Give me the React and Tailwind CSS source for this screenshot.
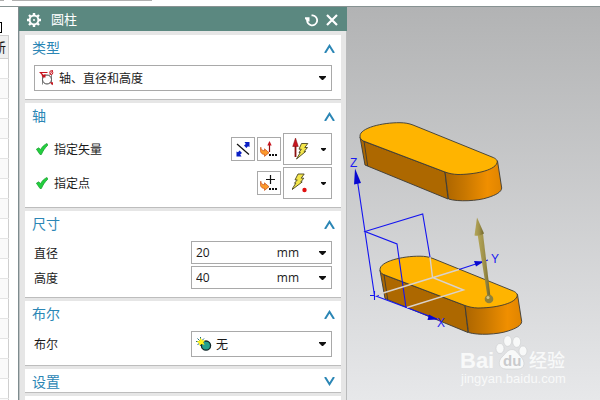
// src/App.jsx
import React, { useState } from "react";
import clsx from "clsx";

const ROWS = Array.from({ length: 18 }, (_, i) => i);

/* ---------- small icons ---------- */

function GearIcon() {
  return (
    <svg width="14" height="14" viewBox="0 0 14 14" fill="none" stroke="#fff">
      <circle cx="7" cy="7" r="4.4" strokeWidth="2" />
      <circle cx="7" cy="7" r="1" fill="#fff" stroke="none" />
      <g strokeWidth="2.4">
        <path d="M7 0v2M7 12v2M0 7h2M12 7h2" />
        <path d="M2 2l1.5 1.5M10.5 10.5L12 12M12 2l-1.5 1.5M3.5 10.5L2 12" />
      </g>
    </svg>
  );
}

function ResetIcon() {
  return (
    <svg width="13" height="13" viewBox="0 0 13 13" fill="none" stroke="#fff" strokeWidth="1.8">
      <path d="M6.5 1.4h1.2a5 5 0 1 1-5.500 4.100" />
      <path d="M0 3.300h4.500v4.200H3L0 5z" fill="#fff" stroke="none" />
    </svg>
  );
}

function CloseIcon() {
  return (
    <svg width="12" height="12" viewBox="0 0 12 12" stroke="#fff" strokeWidth="2.2">
      <path d="M1 1l10 10M11 1L1 11" />
    </svg>
  );
}

function Chevron({ down }) {
  return (
    <svg width="11" height="9" viewBox="0 0 11 9" fill="none" stroke="#2b86b5" strokeWidth="2">
      <path d={down ? "M1 0L5.500 7.200L10 0" : "M1 9L5.500 1.800L10 9"} />
    </svg>
  );
}

function Caret({ small }) {
  return small ? (
    <svg width="5" height="3" viewBox="0 0 5 3" fill="#111">
      <path d="M0 0h5v1L3 3H2L0 1z" />
    </svg>
  ) : (
    <svg width="7" height="4" viewBox="0 0 7 4" fill="#111">
      <path d="M0 0h7v1L4 4H3L0 1z" />
    </svg>
  );
}

function CheckIcon() {
  return (
    <svg width="12" height="12" viewBox="0 0 12 12">
      <path
        d="M.4 6.2L2.8 4.800l1.700 1.900C6 4 8 1.800 11 .5l.8 1.700C9 4.800 7 7.800 5.400 11.500H4z"
        fill="#22d03e"
        stroke="#159a2b"
        strokeWidth=".7"
      />
    </svg>
  );
}

function AxisDiameterIcon() {
  return (
    <svg width="16" height="16" viewBox="0 0 16 16" fill="none">
      <circle cx="8" cy="9.500" r="4.500" stroke="#444" strokeWidth="1" />
      <path d="M3.500 5.500v9M12.500 4.500v10" stroke="#666" strokeWidth=".8" />
      <path d="M.5 2.500h8M1.500 2.500l3.500 4" stroke="#c8141e" strokeWidth="1.200" />
      <path d="M2.500 5.500l4-1.500v3.500H4z" fill="#c8141e" />
      <ellipse cx="12.300" cy="2.600" rx="1.500" ry="2" stroke="#c8141e" />
      <path d="M10.800 5l3-5" stroke="#c8141e" strokeWidth=".8" />
      <path d="M10.500 12.500l3.500 2.800v-3z" fill="#c8141e" />
    </svg>
  );
}

function BooleanNoneIcon() {
  return (
    <svg width="16" height="14" viewBox="0 0 16 14">
      <circle cx="10" cy="8.600" r="4.600" fill="#22a08c" stroke="#12282a" strokeWidth="1.300" />
      <path d="M4.500 0v9M0 4.500h9M1.500 1.500l6.500 6.500M8 1.500L1.500 8" stroke="#1f6a80" strokeWidth="1" />
      <path d="M4.800 .8l1.200 2.400 3 0L7.300 5.300 8.500 8 5.600 7 3.300 8.800 3.100 6.200.6 4.800 3.300 3.800z" fill="#fff21a" />
    </svg>
  );
}

function ReverseIcon() {
  return (
    <svg width="16" height="16" viewBox="0 0 16 16">
      <path d="M2 3l12 10.500" stroke="#111" strokeWidth="1.200" />
      <path d="M14.500 1v5l-1.500-.8-1.600 1.800-2.400-2.400L10.800 3 9.500 1z" fill="#0a1fc4" />
      <path d="M1.500 15.500v-5l1.500.8 1.600-1.800L7 11.900l-1.800 1.600 1.300 2z" fill="#0a1fc4" />
    </svg>
  );
}

function PickerArrow() {
  return (
    <>
      <path
        d="M.8 6.200c.4 2.600 1.400 3.500 3.700 3.500V7.800L9 11.700l-4.500 3.700v-2C1.200 13.400-.6 10.500.8 6.200z"
        fill="#fb9a2c"
        stroke="#cc4a12"
        strokeWidth=".7"
      />
      <path d="M9 14h2M12 14h2M15 14h2" stroke="#111" strokeWidth="2" />
    </>
  );
}

function VectorDialogIcon() {
  return (
    <svg width="18" height="17" viewBox="0 0 18 17">
      <PickerArrow />
      <path d="M9.500 4v7" stroke="#8c1010" strokeWidth="1.200" />
      <path d="M9.500 0l2.200 4.600H7.300z" fill="#c8141e" />
    </svg>
  );
}

function PointDialogIcon() {
  return (
    <svg width="18" height="17" viewBox="0 0 18 17">
      <PickerArrow />
      <path d="M10.500 0v9M6 4.500h9" stroke="#111" strokeWidth="1.200" />
    </svg>
  );
}

function InferredVectorIcon() {
  return (
    <svg width="17" height="22" viewBox="0 0 17 22">
      <path d="M3.500 8v11" stroke="#8c1010" strokeWidth="1.800" />
      <path d="M3.500 0l2.800 8.500H.7z" fill="#c8141e" stroke="#7d0c0c" strokeWidth=".5" />
      <path
        d="M9.500 5.500h6.300l-3 4h2.700l-3.300 4h1.500L4.500 21l3.800-6.500H7l2.300-3.300H7z"
        fill="#f4e64a"
        stroke="#4a4520"
        strokeWidth=".9"
      />
    </svg>
  );
}

function InferredPointIcon() {
  return (
    <svg width="17" height="20" viewBox="0 0 17 20">
      <path
        d="M6 1h6.200l-3 4.200h2.600L8.800 9h1.400L-.5 17l4.300-6.800H2.500l2.800-3.300H3z"
        fill="#f4e64a"
        stroke="#4a4520"
        strokeWidth=".9"
      />
      <circle cx="12.500" cy="17" r="2.200" fill="#e01010" />
    </svg>
  );
}

/* ---------- dialog parts ---------- */

function Section({ title, collapsed, children }) {
  return (
    <section className="border-b border-[#bdbdbd] bg-white">
      <h2 className={clsx("flex items-center justify-between pt-0.5 pr-[6px] pl-[7px]", collapsed ? "h-[23px]" : "h-6")}>
        <span className="text-sm text-[#2b86b5]">{title}</span>
        <button type="button" aria-label={title}>
          <Chevron down={collapsed} />
        </button>
      </h2>
      {!collapsed && <div className="flex flex-col gap-0.5 px-[9px] pt-1.5 pb-2">{children}</div>}
    </section>
  );
}

function IconSelect({ id, label, icon, options }) {
  return (
    <div className="relative w-full">
      <select
        id={id}
        aria-label={label}
        className="block h-[26px] w-full appearance-none border border-[#a9a9a9] bg-white pt-0.5 pl-6 text-xs text-[#1a1a1a]"
      >
        {options.map((o) => (
          <option key={o}>{o}</option>
        ))}
      </select>
      <span className="pointer-events-none absolute inset-y-0 left-[5px] flex items-center">{icon}</span>
      <span className="pointer-events-none absolute inset-y-0 right-[6px] flex items-center">
        <Caret />
      </span>
    </div>
  );
}

function NumberField({ id, label, initial }) {
  const [value, setValue] = useState(initial);
  return (
    <div className="flex items-center justify-between">
      <label htmlFor={id} className="pt-0.5">{label}</label>
      <div className="flex h-[23px] w-[141px] items-center border border-[#a9a9a9] bg-white pr-[5px] pl-1">
        <input
          id={id}
          value={value}
          onChange={(e) => setValue(e.target.value)}
          className="w-0 flex-1 outline-none"
        />
        <span>mm</span>
        <button type="button" aria-label={label + " mm"} className="ml-5">
          <Caret />
        </button>
      </div>
    </div>
  );
}

function PickRow({ label, small, large }) {
  return (
    <div className="flex h-8 items-center gap-0.5 pl-0.5">
      <CheckIcon />
      <span className="ml-1 flex-1 pt-0.5">{label}</span>
      {small.map(([name, icon]) => (
        <button
          key={name}
          type="button"
          aria-label={name}
          className="flex h-6 w-6 items-center justify-center border border-[#a9a9a9] bg-white"
        >
          {icon}
        </button>
      ))}
      <button
        type="button"
        aria-label={label}
        className="flex h-8 w-[49px] items-center justify-between border border-[#a9a9a9] bg-white pr-[5px] pl-2"
      >
        {large}
        <Caret small />
      </button>
    </div>
  );
}

function CylinderDialog() {
  return (
    <div className="flex w-[329px] shrink-0 flex-col border-l border-[#7e8b8e] bg-[#e6e6e6]">
      <header className="flex h-6 shrink-0 items-center bg-[#5b8880] pt-0.5 pr-[9px] pl-2 text-white">
        <GearIcon />
        <h1 className="ml-[10px] flex-1 text-[13px]">圆柱</h1>
        <button type="button" aria-label="重置" className="mr-2">
          <ResetIcon />
        </button>
        <button type="button" aria-label="关闭">
          <CloseIcon />
        </button>
      </header>

      <div className="flex flex-1 flex-col gap-[3px] border-r border-l border-r-[#b9babb] border-l-[#bfc4c5] pt-1 pr-[5px] pl-[5px]">
        <Section title="类型">
          <IconSelect id="type" label="类型" icon={<AxisDiameterIcon />} options={["轴、直径和高度", "圆弧和高度"]} />
        </Section>

        <Section title="轴">
          <PickRow
            label="指定矢量"
            small={[
              ["反向", <ReverseIcon />],
              ["矢量对话框", <VectorDialogIcon />],
            ]}
            large={<InferredVectorIcon />}
          />
          <PickRow label="指定点" small={[["点对话框", <PointDialogIcon />]]} large={<InferredPointIcon />} />
        </Section>

        <Section title="尺寸">
          <NumberField id="diameter" label="直径" initial="20" />
          <NumberField id="height" label="高度" initial="40" />
        </Section>

        <Section title="布尔">
          <div className="flex items-center justify-between">
            <label htmlFor="boolean" className="pt-0.5">布尔</label>
            <div className="w-[141px]">
              <IconSelect id="boolean" label="布尔" icon={<BooleanNoneIcon />} options={["无", "求和", "求差", "求交"]} />
            </div>
          </div>
        </Section>

        <Section title="设置" collapsed />
        <div className="flex-1 bg-white" />
      </div>
    </div>
  );
}

/* ---------- 3D view ---------- */

function Slot() {
  return (
    <g stroke="#3b3a36" strokeWidth=".9" strokeLinejoin="round">
      <path d="M360 137L365 165L448 199L445 172L363 141z" fill="#ad6800" />
      <path
        d="M445 172L448.500 199C458 202 478 201 488 197.500C496 195 501.500 192 501.700 188L497.500 161z"
        fill="url(#round)"
      />
      <path
        d="M360 136C360 128 382 122.500 400 122.700C405 122.700 409 123.500 413 125L492 157C496 158.500 498 160.500 497 163C494 171 473 174.500 458 174.500C453 174.300 449 173.500 445 172L363.500 141C361 140 360 138 360 136z"
        fill="#ffb400"
      />
      <path d="M364 141L367.700 166" />
    </g>
  );
}

function Viewport() {
  return (
    <main className="min-w-0 flex-1 bg-linear-to-b from-[#b2b3b4] to-[#e7e8ea]">
      <svg viewBox="347 7 253 393" preserveAspectRatio="xMinYMin slice" className="h-full w-full">
        <defs>
          <linearGradient id="round">
            <stop offset="0" stopColor="#ac6500" />
            <stop offset=".35" stopColor="#c87700" />
            <stop offset=".75" stopColor="#f08f00" />
            <stop offset="1" stopColor="#e08400" />
          </linearGradient>
          <linearGradient id="shaft">
            <stop offset="0" stopColor="#b5a75a" />
            <stop offset=".5" stopColor="#a0924a" />
            <stop offset="1" stopColor="#6f652c" />
          </linearGradient>
        </defs>

        <Slot />
        <g transform="translate(20 133.500)">
          <Slot />
        </g>

        {/* datum csys */}
        <g fill="none" stroke="#1414f0" strokeWidth="1.100">
          <path d="M374.500 295.500L357 178M459 269.500L488 260M374.500 295.500L437 319" />
          <path d="M430 257L422.700 214L365 231.500L397 244L406 307.500" />
          <path d="M370 295.500h9M374.500 291v9" />
        </g>
        <g fill="none" stroke="#d9d2cc" strokeWidth="1.400">
          <path d="M375 295.500L459 269.500M430 257L432.500 277.500L463.500 290L407 307.500" />
        </g>
        <g fill="#0808d0">
          <path d="M355 168.500L361 183L354 184.500z" />
          <path d="M484 261.500L474 261L476 266.500z" />
          <path d="M438 319.500L429 314.500L427.500 320z" />
        </g>
        <g fill="#1a1af0" fontFamily="Liberation Sans, sans-serif" fontSize="12">
          <text x="350" y="167">Z</text>
          <text x="491" y="263">Y</text>
          <text x="437" y="327">X</text>
        </g>

        {/* direction handle */}
        <path d="M477.500 234L483 233.500L490.500 297H487.500z" fill="url(#shaft)" />
        <path d="M477 217.500L484 233.500Q479 236.500 474.500 235.500z" fill="url(#shaft)" />
        <circle cx="489" cy="299" r="4.300" fill="#8f823c" />
        <circle cx="488" cy="297.500" r="1.500" fill="#cfc58b" />

        {/* watermark */}
        <g fill="#f8f9f9">
          <g stroke="#cbccce" strokeWidth=".6">
            <ellipse cx="500" cy="348.500" rx="4" ry="5" />
            <ellipse cx="507.700" cy="341" rx="4" ry="5.300" />
            <ellipse cx="516.700" cy="342" rx="4" ry="5.300" />
            <ellipse cx="523" cy="351" rx="4" ry="5" />
            <path d="M512 349.500C516 349.500 518 354 521 357C525.500 361.500 525 369 518 369H506C498.500 369 497.500 361.500 502 357C505.500 354 507.500 349.500 512 349.500z" />
          </g>
          <g fontFamily="Liberation Sans, Noto Sans CJK SC, sans-serif">
            <text x="460" y="368" fontSize="22" fontWeight="700">Bai</text>
            <text x="503" y="366" fontSize="15" fontWeight="700" fill="#c9cacc">du</text>
            <text x="529" y="367" fontSize="18" fontWeight="500">经验</text>
            <text x="461" y="383" fontSize="13">jingyan.baidu.com</text>
          </g>
        </g>
      </svg>
    </main>
  );
}

/* ---------- navigator strip left of the dialog ---------- */

function NavigatorStrip() {
  return (
    <aside className="w-[18px] shrink-0 overflow-hidden bg-white">
      <div className="flex h-7 items-center">
        <span className="mt-3 h-[11px] w-0.5 border-y border-r border-black" />
      </div>
      <table className="w-[9px] table-fixed border-collapse border-t border-r border-[#cfcfcf]">
        <thead>
          <tr className="h-[23px] border-b border-[#cfcfcf] bg-[#efefef]">
            <th className="p-0 font-normal">
              <div className="flex w-[6px] justify-end overflow-hidden text-[13px] leading-5">
                <span>新</span>
              </div>
            </th>
          </tr>
        </thead>
        <tbody>
          {ROWS.map((i) => (
            <tr key={i} className="h-5 border-b border-[#e4e4e4] even:bg-[#fafafa]">
              <td className="p-0" />
            </tr>
          ))}
        </tbody>
      </table>
    </aside>
  );
}

export default function App() {
  return (
    <div className="flex h-screen flex-col overflow-hidden bg-white font-['Open_Sans','Noto_Sans_CJK_SC',sans-serif] text-xs text-[#1a1a1a]">
      <div className="flex h-[7px] shrink-0 items-start gap-2 border-b border-[#879292]">
        <span className="h-px w-1 bg-[#b0b0b0]" />
        <span className="h-px w-[140px] bg-[#b0b0b0]" />
      </div>
      <div className="flex min-h-0 flex-1">
        <NavigatorStrip />
        <CylinderDialog />
        <Viewport />
      </div>
    </div>
  );
}
